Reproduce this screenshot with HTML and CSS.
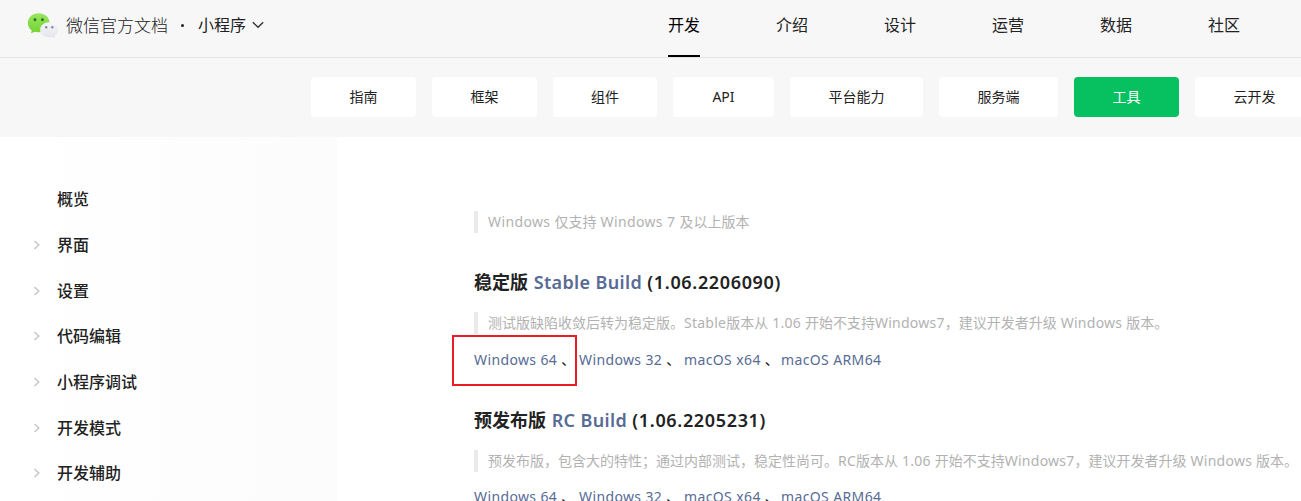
FILE: index.html
```html
<!DOCTYPE html>
<html lang="zh-CN">
<head>
<meta charset="utf-8">
<title>微信官方文档</title>
<link rel="stylesheet" href="styles.css">
</head>
<body>
<header class="header">
  <div class="brand">
    <svg class="logo" width="32" height="26" viewBox="0 0 32 26">
      <defs>
        <linearGradient id="green" x1="0" y1="0" x2="0" y2="1"><stop offset="0" stop-color="#9be45f"/><stop offset="1" stop-color="#72d334"/></linearGradient>
        <linearGradient id="silver" x1="0" y1="0" x2="0" y2="1"><stop offset="0" stop-color="#f5f6fa"/><stop offset="1" stop-color="#e3e5ea"/></linearGradient>
      </defs>
      <path fill="url(#green)" d="M11.700.300C5.600.300.800 4.500.800 9.900c0 3 1.500 5.700 4 7.500L4 20.300l3.800-1.600c1.200.300 2.500.500 3.900.500 6 0 10.900-4.100 10.900-9.300S17.700.300 11.700.300Z"/>
      <path fill="url(#silver)" d="M22.300 9.200c-5.100 0-9.200 3.400-9.200 7.600s4.100 7.600 9.200 7.600c1.100 0 2.200-.200 3.200-.500l3 1.500-.700-2.600c2.100-1.400 3.400-3.600 3.400-6 0-4.200-4-7.600-8.900-7.600Z"/>
      <circle cx="8" cy="6.700" r="1.450" fill="#197626"/><circle cx="15.400" cy="6.700" r="1.450" fill="#197626"/>
      <circle cx="19.200" cy="14.200" r="1.200" fill="#858b91"/><circle cx="25.300" cy="14.200" r="1.200" fill="#858b91"/>
    </svg>
    <span class="brand-name">微信官方文档</span>
    <i class="dot"></i>
    <span class="product">小程序</span>
    <svg class="chevron" width="12" height="8" viewBox="0 0 12 8"><path d="M.8 1.200 6 6.300l5.200-5.100" fill="none" stroke="#333" stroke-width="1.400"/></svg>
  </div>
  <nav class="nav">
    <a class="nav-item active">开发</a><a class="nav-item">介绍</a><a class="nav-item">设计</a><a class="nav-item">运营</a><a class="nav-item">数据</a><a class="nav-item">社区</a>
  </nav>
</header>
<nav class="tabs">
  <a class="tab">指南</a><a class="tab">框架</a><a class="tab tab-mid">组件</a><a class="tab tab-api">API</a><a class="tab tab-four">平台能力</a><a class="tab tab-three">服务端</a><a class="tab selected">工具</a><a class="tab tab-three">云开发</a>
</nav>
<div class="page">
  <aside class="sidebar">
    <div class="side-item leaf">概览</div>
    <div class="side-item"><svg class="arrow" viewBox="0 0 8 10"><path d="M1.500 1l4.300 4-4.300 4"/></svg>界面</div>
    <div class="side-item"><svg class="arrow" viewBox="0 0 8 10"><path d="M1.500 1l4.300 4-4.300 4"/></svg>设置</div>
    <div class="side-item"><svg class="arrow" viewBox="0 0 8 10"><path d="M1.500 1l4.300 4-4.300 4"/></svg>代码编辑</div>
    <div class="side-item"><svg class="arrow" viewBox="0 0 8 10"><path d="M1.500 1l4.300 4-4.300 4"/></svg>小程序调试</div>
    <div class="side-item"><svg class="arrow" viewBox="0 0 8 10"><path d="M1.500 1l4.300 4-4.300 4"/></svg>开发模式</div>
    <div class="side-item"><svg class="arrow" viewBox="0 0 8 10"><path d="M1.500 1l4.300 4-4.300 4"/></svg>开发辅助</div>
  </aside>
  <main class="content">
    <blockquote class="quote note"><span class="en">Windows </span>仅支持<span class="en"> Windows 7 </span>及以上版本</blockquote>
    <h3 class="title">稳定版 <a class="link">Stable Build</a><span class="version"> (1.06.2206090)</span></h3>
    <blockquote class="quote">测试版缺陷收敛后转为稳定版。<span class="en">Stable</span>版本从<span class="en"> 1.06 </span>开始不支持<span class="en">Windows7</span>，建议开发者升级<span class="en"> Windows </span>版本。</blockquote>
    <div class="downloads">
      <div class="entry w64"><a class="link">Windows 64</a><span class="sep">、</span></div>
      <div class="entry w32"><a class="link">Windows 32</a><span class="sep">、</span></div>
      <div class="entry mac"><a class="link">macOS x64</a><span class="sep">、</span></div>
      <div class="entry"><a class="link">macOS ARM64</a></div>
      <div class="highlight"></div>
    </div>
    <h3 class="title">预发布版 <a class="link">RC Build</a><span class="version"> (1.06.2205231)</span></h3>
    <blockquote class="quote">预发布版，包含大的特性；通过内部测试，稳定性尚可。<span class="en">RC</span>版本从<span class="en"> 1.06 </span>开始不支持<span class="en">Windows7</span>，建议开发者升级<span class="en"> Windows </span>版本。</blockquote>
    <div class="downloads last">
      <div class="entry w64"><a class="link">Windows 64</a><span class="sep">、</span></div>
      <div class="entry w32"><a class="link">Windows 32</a><span class="sep">、</span></div>
      <div class="entry mac"><a class="link">macOS x64</a><span class="sep">、</span></div>
      <div class="entry"><a class="link">macOS ARM64</a></div>
    </div>
  </main>
</div>
</body>
</html>
```
FILE: styles.css
```css
* { box-sizing: border-box; }
body {
  margin: 0;
  height: 501px;
  overflow: hidden;
  background: #fff;
  color: #222;
  font: 14px/22px "Noto Sans", "Noto Sans CJK SC", sans-serif;
}
.header {
  height: 58px;
  display: flex;
  background: #f7f7f7;
  border-bottom: 1px solid #e5e5e5;
}
.brand {
  width: 668px;
  height: 51px;
  padding-left: 27px;
  display: flex;
  align-items: center;
  font-size: 16px;
  font-weight: 300;
}
.logo { flex: none; }
.brand-name { margin-left: 7px; font-size: 17px; }
.dot { width: 3px; height: 3px; margin: 0 14px 0 13px; border-radius: 50%; background: #222; }
.product { font-weight: 400; padding-bottom: 2px; }
.chevron { margin: 0 0 1px 6px; }
.nav { display: flex; gap: 76px; height: 57px; }
.nav-item {
  width: 32px;
  white-space: nowrap;
  font-size: 16px;
  line-height: 51px;
  height: 57px;
}
.nav-item.active { color: #000; border-bottom: 2px solid #000; }
.tabs {
  display: flex;
  gap: 16px;
  height: 79px;
  padding: 19px 0 0 311px;
  background: #f7f7f7;
  overflow: hidden;
}
.tab {
  flex: none;
  width: 105px;
  height: 40px;
  border-radius: 4px;
  background: #fff;
  line-height: 40px;
  text-align: center;
}
.tab-mid { width: 104px; }
.tab-api { width: 101px; }
.tab-four { width: 133px; }
.tab-three { width: 119px; }
.tab.selected { background: #07c160; color: #fff; }
.page { display: flex; height: 364px; }
.sidebar {
  width: 337px;
  flex: none;
  padding: 39.4px 0 0 33px;
  background: linear-gradient(to right, #fff, #fcfcfc);
}
.side-item {
  height: 45.67px;
  display: flex;
  align-items: center;
  font-size: 16px;
  font-weight: 500;
}
.side-item.leaf { padding-left: 24px; }
.arrow { width: 8px; height: 10px; margin-right: 16px; fill: none; stroke: #c8c8c8; stroke-width: 1.5; }
.content { width: 964px; padding: 74px 0 0 137px; }
.quote {
  height: 22px;
  margin: 0;
  padding-left: 10px;
  border-left: 4px solid #eaeaea;
  color: #b2b2b2;
  white-space: nowrap;
}
.en { letter-spacing: .26px; }
.note .en { letter-spacing: .38px; }
.title {
  margin: 36px 0 16px;
  font-size: 18px;
  line-height: 27px;
  font-weight: 600;
  white-space: nowrap;
}
.title .link { margin-left: 1px; letter-spacing: .35px; }
.version { letter-spacing: .65px; }
.link { color: #576b95; letter-spacing: .38px; }
.downloads { position: relative; display: flex; height: 22px; margin: 15px 0 0; white-space: nowrap; }
.downloads.last { margin-top: 14px; }
.entry { display: flex; }
.sep { margin-left: 4px; }
.w64, .w32 { width: 105px; }
.mac { width: 97px; }
.highlight {
  position: absolute;
  left: -22px;
  top: -14px;
  width: 125px;
  height: 51px;
  border: 2px solid #ed1c24;
}
```
